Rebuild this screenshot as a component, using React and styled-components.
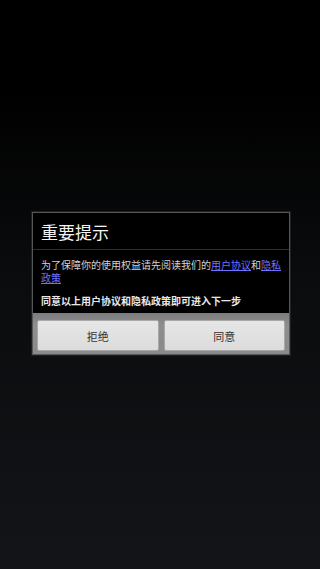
import styled, { createGlobalStyle } from "styled-components";

const GlobalStyle = createGlobalStyle`
	html, body {
		margin: 0;
		padding: 0;
		height: 100%;
	}
	body {
		font-family: "Noto Sans CJK SC", "Noto Sans", sans-serif;
		background: #000;
	}
	#root {
		height: 100%;
	}
`;

export default function App() {
	return (
		<>
			<GlobalStyle />
			<Screen>
				<Dialog>
					<Title>重要提示</Title>
					<Body>
						<Message>
							为了保障你的使用权益请先阅读我们的<Link>用户协议</Link>和<Link>隐私政策</Link>
						</Message>
						<Notice>同意以上用户协议和隐私政策即可进入下一步</Notice>
					</Body>
					<ButtonBar>
						<Button>拒绝</Button>
						<Button>同意</Button>
					</ButtonBar>
				</Dialog>
			</Screen>
		</>
	);
}

const Screen = styled.div`
	height: 569px;
	display: flex;
	align-items: flex-start;
	justify-content: center;
	padding: 212px 0 0 2px;
	box-sizing: border-box;
	background: linear-gradient(to bottom, #000 0%, #000 15%, #0b0c0e 50%, #121417 100%);
`;

const Dialog = styled.div`
	width: 256px;
	background: #000;
	border: 1px solid #555658;
	box-shadow: 0 0 0 1px #1e1f21;
	display: flex;
	flex-direction: column;
`;

const Title = styled.div`
	height: 36px;
	display: flex;
	align-items: center;
	padding: 0 8px;
	font-size: 17px;
	color: #f4f4f4;
	border-bottom: 1px solid #2c2d2f;
`;

const Body = styled.div`
	padding: 8px 8px 6px 8px;
	display: flex;
	flex-direction: column;
	gap: 10px;
`;

const Message = styled.div`
	font-size: 10px;
	line-height: 13px;
	color: #d2d2d2;
	word-break: break-all;
`;

const Link = styled.span`
	color: #7070ff;
	text-decoration: underline;
`;

const Notice = styled.div`
	font-size: 10px;
	line-height: 13px;
	font-weight: bold;
	color: #e8e8e8;
`;

const ButtonBar = styled.div`
	display: flex;
	gap: 5px;
	padding: 7px 4px 3px 4px;
	background: linear-gradient(to bottom, #7c7c7c, #8e8e8e 30%, #8a8a8a);
`;

const Button = styled.div`
	flex: 1;
	height: 31px;
	display: flex;
	align-items: center;
	justify-content: center;
	font-size: 11px;
	color: #333;
	background: linear-gradient(to bottom, #e6e6e6, #dcdcdc);
	border: 1px solid #a8a8a8;
	border-radius: 2px;
	box-sizing: border-box;
`;
